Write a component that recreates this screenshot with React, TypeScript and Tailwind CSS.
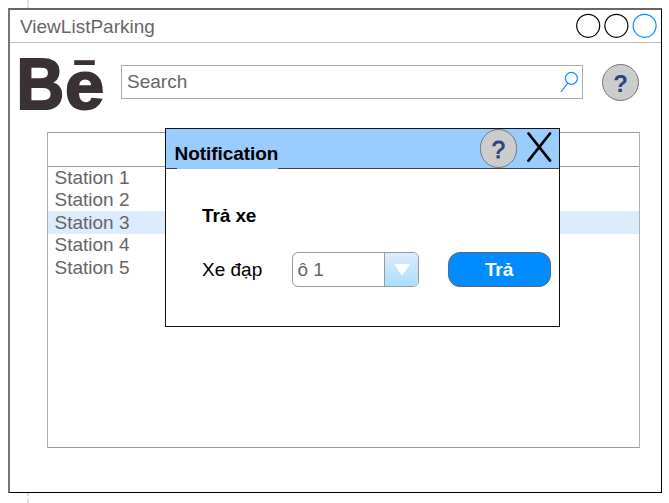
function HelpBadge({ className = "", glyph = "" }: { className?: string; glyph?: string }) {
  return (
    <div className={`flex shrink-0 items-center justify-center rounded-full border border-[#777] bg-[#ccc] ${className}`}>
      <span className={`text-[24px] leading-none text-[#2a4480] ${glyph}`}>?</span>
    </div>
  );
}

function TitleBar() {
  return (
    <header className="flex h-[33px] shrink-0 items-center border-b border-[#bbb] pl-[10px]">
      <h1 className="mt-[1px] text-[19px] leading-[22px] text-[#666]">ViewListParking</h1>
      <svg className="ml-auto h-[26px] w-[86px]" viewBox="0 0 86 26" fill="none" strokeWidth="1.2">
        <circle cx="13.2" cy="12.8" r="11.5" stroke="#000" />
        <circle cx="41.4" cy="12.8" r="11.5" stroke="#000" />
        <circle cx="69.6" cy="12.8" r="11.5" stroke="#008cff" />
      </svg>
    </header>
  );
}

function Logo() {
  return (
    <svg className="h-[56px] w-[92px] shrink-0 overflow-visible" viewBox="0 0 92 56" fill="#3a3232" stroke="#3a3232" fontFamily="'Liberation Sans', sans-serif" fontWeight="700">
      <text x="-3.4" y="52.7" fontSize="71.5" strokeWidth="2.2" textLength="47.6" lengthAdjust="spacingAndGlyphs">B</text>
      <text x="45" y="52.5" fontSize="68.5" strokeWidth="2" textLength="39.2" lengthAdjust="spacingAndGlyphs">e</text>
      <rect x="54.2" y="4.2" width="20.6" height="4.8" stroke="none" />
    </svg>
  );
}

function SearchRow() {
  return (
    <div className="flex h-[56px] items-start">
      <div className="mt-[13px] ml-[10px]"><Logo /></div>
      <div className="mt-[22px] ml-[9px] flex h-[34px] w-[462px] items-center border border-[#aaa] pr-[3px] pl-[5px]">
        <span className="mb-[1px] text-[19px] leading-[22px] text-[#666]">Search</span>
        <svg className="ml-auto h-[22px] w-[20px]" viewBox="0 0 20 22" fill="none" stroke="#1490ff" strokeWidth="1.2">
          <circle cx="12.4" cy="7.3" r="6" />
          <path d="M8.8 12.1 2 20.9" />
        </svg>
      </div>
      <HelpBadge className="mt-[21px] ml-[19px] h-[37px] w-[37px]" glyph="mt-[3px] font-bold" />
    </div>
  );
}

const stations = ["Station 1", "Station 2", "Station 3", "Station 4", "Station 5"];

function StationList() {
  return (
    <section className="mt-[33px] ml-[37px] h-[316px] w-[593px] border border-[#999] border-x-[#b0b0b0]">
      <div className="h-[34px] border-b border-[#999]" />
      <ul className="text-[19px] text-[#666]">
        {stations.map((name, i) => (
          <li key={name} className={`pl-[6.5px] ${i === 2 ? "h-[23px] bg-[#dcecfd] leading-[23px]" : i === 4 ? "h-[24px] leading-[24px]" : "h-[22px] leading-[22px]"}`}>
            {name}
          </li>
        ))}
      </ul>
    </section>
  );
}

function NotificationDialog() {
  return (
    <section className="absolute top-[128px] left-[165px] flex h-[199px] w-[395px] flex-col border border-[#111] bg-white text-black">
      <header className="relative flex h-[40px] shrink-0 border-b border-[#444] bg-[#99ccff]">
        <h2 className="mt-[14px] ml-[8.5px] text-[19px] leading-[22px] font-bold tracking-[-0.05px]">Notification</h2>
        <HelpBadge className="ml-auto h-[39px] w-[37px]" glyph="mt-[3px] [-webkit-text-stroke:0.8px_#2a4480]" />
        <svg className="mt-[3px] mr-[6px] ml-[9px] h-[32px] w-[27px]" viewBox="0 0 27 32" fill="none" stroke="#000" strokeWidth="2.7" strokeLinecap="round">
          <path d="M2.5 1.5 24 28.6M24 1.5 2.5 28.6" />
        </svg>
        <div className="absolute -bottom-px left-[11px] h-px w-[101px] bg-[#99ccff]" />
      </header>
      <h3 className="mt-[36px] ml-[36px] text-[19px] leading-[22px] font-bold tracking-[-0.1px]">Trả xe</h3>
      <div className="mt-[25px] flex h-[35px] items-center pl-[36px]">
        <label className="w-[90px] text-[19px] leading-[22px]">Xe đạp</label>
        <div className="flex h-[35px] w-[127px] overflow-hidden rounded-[6px] border border-[#999]">
          <span className="flex-1 pl-[4.5px] text-[19px] leading-[33px] text-[#666]">ô 1</span>
          <span className="flex w-[34px] items-center justify-center border-l border-[#999] bg-linear-to-b from-[#dcecff] to-[#aaddff]">
            <svg className="h-[12px] w-[16px]" viewBox="0 0 16 12" fill="#fff"><path d="M0 0h16L8 12z" /></svg>
          </span>
        </div>
        <button className="ml-[29px] h-[35px] w-[103px] rounded-[12px] border border-[#666] bg-[#008cff] pr-[1px] text-[19px] leading-[33px] font-bold tracking-[-0.1px] text-white">Trả</button>
      </div>
    </section>
  );
}

export default function App() {
  return (
    <main className="relative h-[503px] w-[669px] overflow-hidden bg-white font-['Liberation_Sans',Arial,sans-serif]">
      <div className="ml-[27px] h-[8px] w-[2px] bg-linear-to-b from-[#ddd] from-40% via-white via-50% to-[#ddd] to-80%" />
      <div className="ml-[8px] flex h-[485px] w-[654px] flex-col border border-t-2 border-l-2 border-black border-t-[#666] border-l-[#777]">
        <TitleBar />
        <SearchRow />
        <StationList />
      </div>
      <div className="ml-[27px] flex h-[10px] w-[2px] flex-col gap-[3px] bg-white">
        <div className="h-[3px] bg-[#ddd]" />
        <div className="h-[4px] bg-[#ddd]" />
      </div>
      <NotificationDialog />
    </main>
  );
}
